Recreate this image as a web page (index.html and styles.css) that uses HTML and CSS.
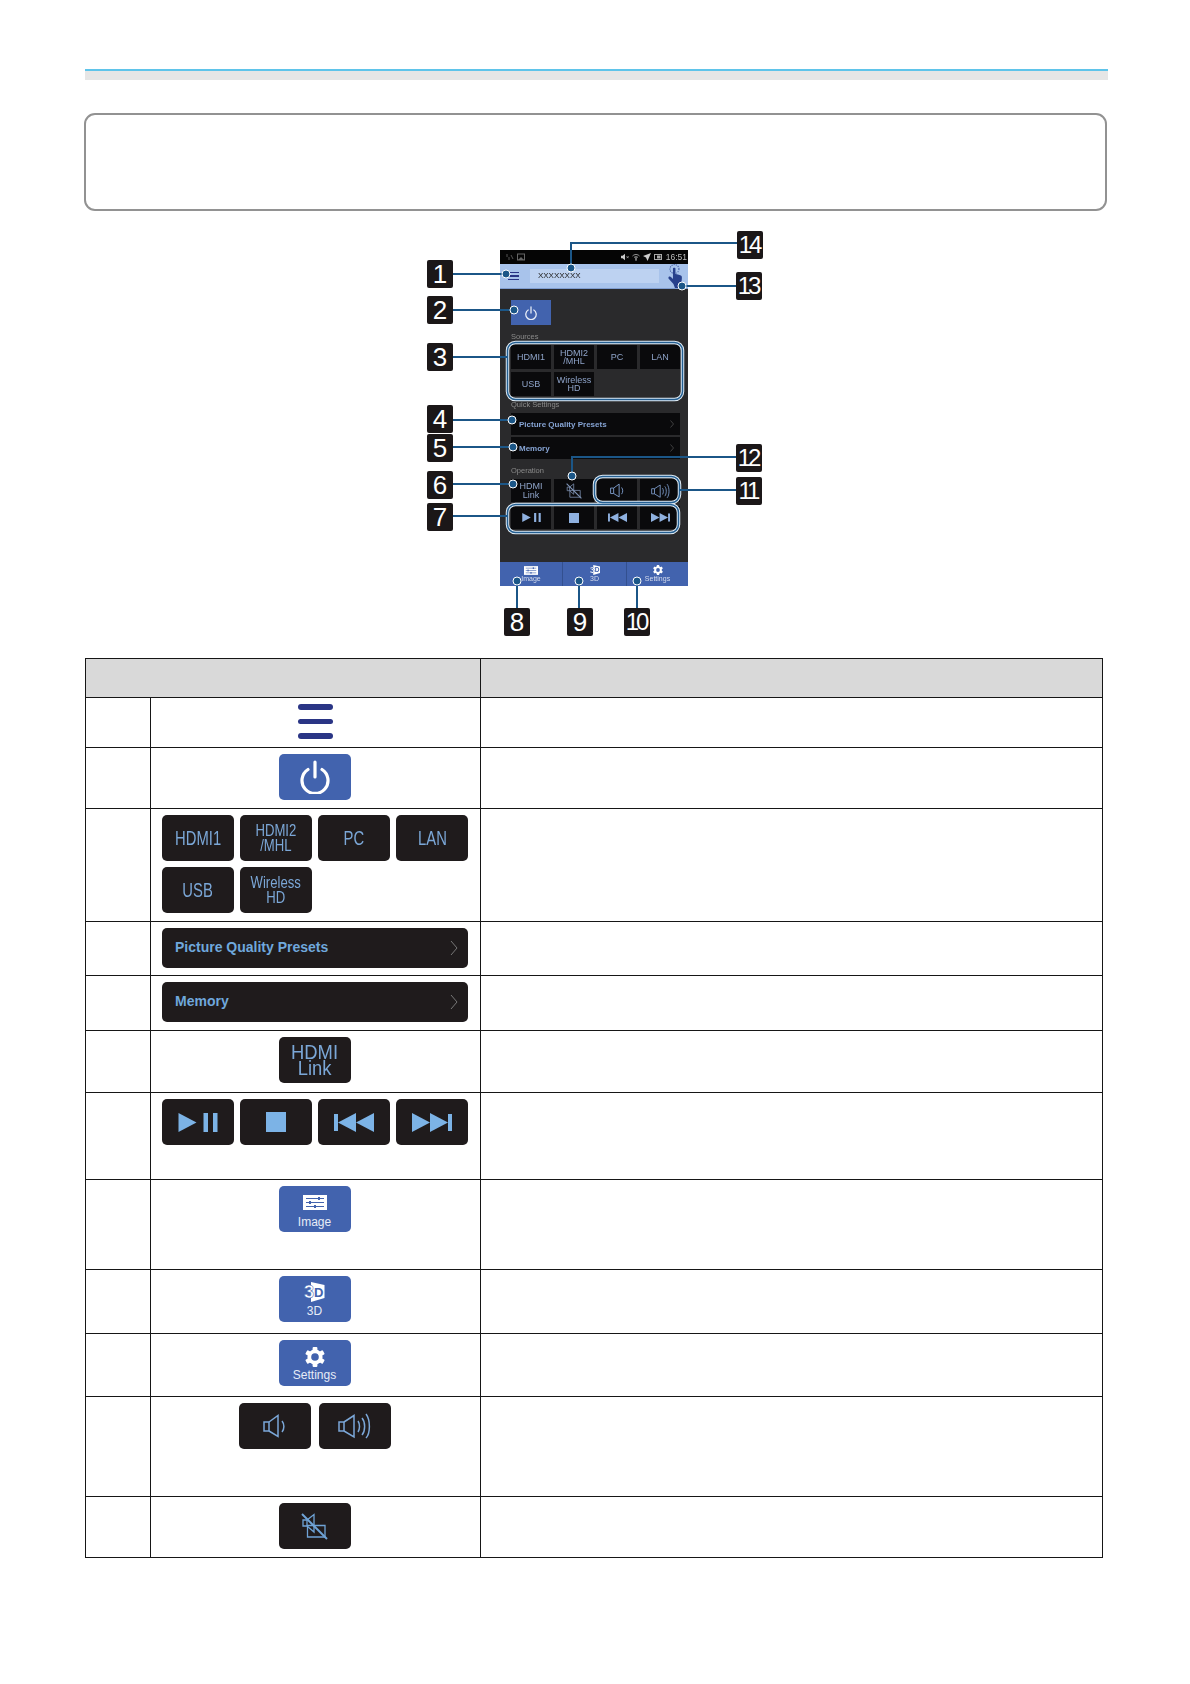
FILE: index.html
```html
<!DOCTYPE html>
<html lang="en">
<head>
    <meta charset="UTF-8" />
    <title>Projector app screen</title>
    <link rel="stylesheet" href="styles.css">
</head>
<body>

<!-- shared icons -->
<svg class="defs" width="0" height="0">
    <symbol id="i-playpause" viewBox="0 0 39 19">
        <path d="M0 0L18 9.5L0 19Z"/><rect x="25" y="0" width="4.5" height="19"/><rect x="34.5" y="0" width="4.5" height="19"/>
    </symbol>
    <symbol id="i-stop" viewBox="0 0 20 20"><rect width="20" height="20"/></symbol>
    <symbol id="i-prev" viewBox="0 0 40 19">
        <rect x="0" y="1" width="4" height="17"/><path d="M22 0V19L4 9.5Z"/><path d="M40 0V19L22 9.5Z"/>
    </symbol>
    <symbol id="i-next" viewBox="0 0 40 19">
        <path d="M0 0V19L18 9.5Z"/><path d="M18 0V19L36 9.5Z"/><rect x="36" y="1" width="4" height="17"/>
    </symbol>
    <symbol id="i-voldown" viewBox="0 0 23 24">
        <g fill="none" stroke="currentColor" stroke-width="1.5">
            <path d="M1 8H6V17H1Z"/><path d="M6 8L15 1.5V22.5L6 17"/><path d="M19 7C21.5 10 21.5 15 19 18"/>
        </g>
    </symbol>
    <symbol id="i-volup" viewBox="0 0 33 28">
        <g fill="none" stroke="currentColor" stroke-width="1.5">
            <path d="M1 10H6V19H1Z"/><path d="M6 10L16 3.5V25L6 19"/><path d="M20 9C22 12 22 17 20 20"/><path d="M24 6C27.5 10 27.5 19 24 23"/><path d="M28 2C32.5 8 32.5 21 28 26"/>
        </g>
    </symbol>
    <symbol id="i-mute" viewBox="0 0 27 27">
        <g fill="none" stroke="currentColor" stroke-width="1.3">
            <path d="M2 7H6V13H2Z"/><path d="M6 7L13 1.5V19L6 13"/><path d="M6.5 12.5H24V24H6.5Z"/>
        </g>
        <path d="M1 1L26 26" stroke="currentColor" stroke-width="2"/>
    </symbol>
    <symbol id="i-image" viewBox="0 0 24 15">
        <rect width="24" height="15" fill="#fff"/>
        <g stroke="#4263ae" stroke-width="1">
            <path d="M3 3.5H21M3 7.5H21M3 11.5H21"/>
        </g>
        <g fill="#4263ae"><rect x="15" y="2" width="2" height="3"/><rect x="6" y="6" width="2" height="3"/><rect x="11" y="10" width="2" height="3"/></g>
    </symbol>
    <symbol id="i-gear" viewBox="0 0 20 20">
        <g fill="#fff">
            <rect x="7.6" y="0" width="4.8" height="20" rx="1"/>
            <rect x="7.6" y="0" width="4.8" height="20" rx="1" transform="rotate(60 10 10)"/>
            <rect x="7.6" y="0" width="4.8" height="20" rx="1" transform="rotate(120 10 10)"/>
            <circle cx="10" cy="10" r="7.6"/>
        </g>
        <circle cx="10" cy="10" r="3.8" fill="#4263ae"/>
    </symbol>
    <symbol id="i-power" viewBox="0 0 30 34">
        <g fill="none" stroke="currentColor" stroke-width="3.2" stroke-linecap="round">
            <path d="M15 2V17"/><path d="M8 9.5A13 13 0 1 0 22 9.5"/>
        </g>
    </symbol>
    <symbol id="i-chevron" viewBox="0 0 8 16">
        <path d="M1 1L7 8L1 15" fill="none" stroke="currentColor" stroke-width="1"/>
    </symbol>
</svg>

<div class="page">

    <div class="top-rule"></div>
    <div class="note-box"></div>

    <!-- схема экрана с выносками -->
    <div class="figure">
        <div class="phone">
            <div class="status-bar">
                <span class="status-left">
                    <svg class="st-icon" viewBox="0 0 8 8"><path d="M1 1V4M3 4V7M5 2L7 6" stroke="#555" fill="none"/></svg>
                    <svg class="st-icon" viewBox="0 0 8 8"><rect x=".5" y="1" width="7" height="6" fill="none" stroke="#666"/><path d="M1 7L4 4L7 7Z" fill="#666"/></svg>
                </span>
                <span class="status-right">
                    <svg class="st-icon" viewBox="0 0 10 8"><path d="M0 2.5H2L5 0V8L2 5.5H0Z" fill="#ccc"/><path d="M7 3L9.5 5.5M9.5 3L7 5.5" stroke="#aaa"/></svg>
                    <svg class="st-icon" viewBox="0 0 8 8"><path d="M.5 3C2.5 1 5.5 1 7.5 3M2 4.5C3 3.500 5 3.500 6 4.500M3 6H5M4 4V8" stroke="#999" fill="none"/></svg>
                    <svg class="st-icon" viewBox="0 0 8 8"><path d="M8 0L0 3L3 4.5L4.5 8Z" fill="#ccc"/></svg>
                    <svg class="st-icon" viewBox="0 0 8 8"><rect x=".5" y="1.5" width="7" height="5" fill="none" stroke="#aaa"/><rect x="3" y="2.500" width="3.500" height="3" fill="#aaa"/></svg>
                    <span class="time">16:51</span>
                </span>
            </div>
            <div class="app-header">
                <span class="small-burger"><i></i><i></i><i></i></span>
                <span class="name-field">XXXXXXXX</span>
                <svg class="hand" viewBox="0 0 14 24">
                    <circle cx="6.500" cy="5" r="4.500" fill="none" stroke="#4a64a8" stroke-width="1.100" stroke-dasharray="1.200 1"/>
                    <path d="M5 4.500C5 3.500 7.500 3.500 7.500 4.500V10L10 10.500L13 11.500C14 12 14 13 14 14L13.500 19L10.500 24H7L5.500 20L0.500 14.500C0 12.500 2 12 3.500 13.500L5 15Z" fill="#27408c"/>
                </svg>
            </div>
            <div class="phone-body">
                <div class="phone-power"><svg class="p-power-icon"><use href="#i-power"/></svg></div>
                <div class="phone-label label-sources">Sources</div>
                <div class="phone-grid">
                    <div class="pbtn">HDMI1</div>
                    <div class="pbtn">HDMI2<br>/MHL</div>
                    <div class="pbtn">PC</div>
                    <div class="pbtn">LAN</div>
                    <div class="pbtn">USB</div>
                    <div class="pbtn">Wireless<br>HD</div>
                </div>
                <div class="phone-label label-quick">Quick Settings</div>
                <div class="phone-row">Picture Quality Presets<svg class="p-chevron"><use href="#i-chevron"/></svg></div>
                <div class="phone-row">Memory<svg class="p-chevron"><use href="#i-chevron"/></svg></div>
                <div class="phone-label label-op">Operation</div>
                <div class="phone-grid op-grid">
                    <div class="pbtn">HDMI<br>Link</div>
                    <div class="pbtn"><svg class="p-mute"><use href="#i-mute"/></svg></div>
                    <div class="pbtn"><svg class="p-voldown"><use href="#i-voldown"/></svg></div>
                    <div class="pbtn"><svg class="p-volup"><use href="#i-volup"/></svg></div>
                    <div class="pbtn"><svg class="p-play"><use href="#i-playpause"/></svg></div>
                    <div class="pbtn"><svg class="p-stop"><use href="#i-stop"/></svg></div>
                    <div class="pbtn"><svg class="p-play"><use href="#i-prev"/></svg></div>
                    <div class="pbtn"><svg class="p-play"><use href="#i-next"/></svg></div>
                </div>
            </div>
            <div class="phone-tabs">
                <div class="ptab"><svg class="p-tab-img"><use href="#i-image"/></svg><span>Image</span></div>
                <div class="ptab">
                    <svg class="p-tab-3d" viewBox="0 0 21 20"><path d="M7 0L20.500 3V16L7 20Z" fill="#fff"/><text x="0" y="16" class="icon-three">3</text><text x="10" y="14.500" class="icon-d">D</text></svg>
                    <span>3D</span>
                </div>
                <div class="ptab"><svg class="p-tab-gear"><use href="#i-gear"/></svg><span>Settings</span></div>
            </div>
        </div>

        <!-- выноски -->
        <svg class="leaders" viewBox="0 0 1018 438">
            <g class="halo">
                <rect x="422.500" y="122.500" width="175" height="57" rx="8"/>
                <rect x="509.500" y="256.500" width="85" height="26" rx="8"/>
                <rect x="422.500" y="284.500" width="171" height="28" rx="8"/>
            </g>
            <g class="ring">
                <rect x="422.500" y="122.500" width="175" height="57" rx="8"/>
                <rect x="509.500" y="256.500" width="85" height="26" rx="8"/>
                <rect x="422.500" y="284.500" width="171" height="28" rx="8"/>
            </g>
            <path class="lead" d="M368 54H421M368 90H429M368 137H422M368 200H427M368 227H428M368 264H428M368 296H422M432 361V388M494 361V388M552 361V388M594 270H651M487 256V237H651M597 66H651M486 48V23H652"/>
            <g class="dot">
                <circle cx="421" cy="54" r="4"/><circle cx="429" cy="90" r="4"/><circle cx="427" cy="200" r="4"/>
                <circle cx="428" cy="227" r="4"/><circle cx="428" cy="264" r="4"/><circle cx="432" cy="361" r="4"/>
                <circle cx="494" cy="361" r="4"/><circle cx="552" cy="361" r="4"/><circle cx="487" cy="256" r="4"/>
                <circle cx="597" cy="66" r="4"/><circle cx="486" cy="48" r="4"/>
            </g>
        </svg>
        <span class="num c1">1</span>
        <span class="num c2">2</span>
        <span class="num c3">3</span>
        <span class="num c4">4</span>
        <span class="num c5">5</span>
        <span class="num c6">6</span>
        <span class="num c7">7</span>
        <span class="num c8">8</span>
        <span class="num c9">9</span>
        <span class="num two c10">10</span>
        <span class="num two c11">11</span>
        <span class="num two c12">12</span>
        <span class="num two c13">13</span>
        <span class="num two c14">14</span>
    </div>

    <table class="parts">
        <colgroup><col class="col-num"><col class="col-btn"><col class="col-text"></colgroup>
        <thead>
        <tr class="r-head"><th colspan="2"></th><th></th></tr>
        </thead>
        <tbody>
        <tr class="r1"><td></td><td><div class="center"><span class="burger"><i></i><i></i><i></i></span></div></td><td></td></tr>
        <tr class="r2"><td></td><td><div class="center"><div class="btn blue"><svg class="power-icon"><use href="#i-power"/></svg></div></div></td><td></td></tr>
        <tr class="r3"><td></td><td>
            <div class="btn-grid">
                <div class="btn"><span class="tall">HDMI1</span></div>
                <div class="btn"><span class="tall-two">HDMI2<br>/MHL</span></div>
                <div class="btn"><span class="tall">PC</span></div>
                <div class="btn"><span class="tall">LAN</span></div>
                <div class="btn"><span class="tall">USB</span></div>
                <div class="btn"><span class="tall-two">Wireless<br>HD</span></div>
            </div>
        </td><td></td></tr>
        <tr class="r4"><td></td><td><div class="menu-row">Picture Quality Presets<svg class="chevron"><use href="#i-chevron"/></svg></div></td><td></td></tr>
        <tr class="r5"><td></td><td><div class="menu-row">Memory<svg class="chevron"><use href="#i-chevron"/></svg></div></td><td></td></tr>
        <tr class="r6"><td></td><td><div class="center"><div class="btn"><span class="link-text">HDMI<br>Link</span></div></div></td><td></td></tr>
        <tr class="r7"><td></td><td>
            <div class="btn-grid">
                <div class="btn"><svg class="play-icon"><use href="#i-playpause"/></svg></div>
                <div class="btn"><svg class="stop-icon"><use href="#i-stop"/></svg></div>
                <div class="btn"><svg class="play-icon"><use href="#i-prev"/></svg></div>
                <div class="btn"><svg class="play-icon"><use href="#i-next"/></svg></div>
            </div>
        </td><td></td></tr>
        <tr class="r8"><td></td><td><div class="center"><div class="btn blue tab"><svg class="img-icon"><use href="#i-image"/></svg><span>Image</span></div></div></td><td></td></tr>
        <tr class="r9"><td></td><td><div class="center"><div class="btn blue tab">
            <svg class="d3-icon" viewBox="0 0 21 20"><path d="M7 0L20.500 3V16L7 20Z" fill="#fff"/><text x="0" y="16" class="icon-three">3</text><text x="10" y="14.500" class="icon-d">D</text></svg>
            <span>3D</span>
        </div></div></td><td></td></tr>
        <tr class="r10"><td></td><td><div class="center"><div class="btn blue tab"><svg class="gear-icon"><use href="#i-gear"/></svg><span>Settings</span></div></div></td><td></td></tr>
        <tr class="r11"><td></td><td>
            <div class="center gap8">
                <div class="btn"><svg class="voldown-icon"><use href="#i-voldown"/></svg></div>
                <div class="btn"><svg class="volup-icon"><use href="#i-volup"/></svg></div>
            </div>
        </td><td></td></tr>
        <tr class="r12"><td></td><td><div class="center"><div class="btn"><svg class="mute-icon"><use href="#i-mute"/></svg></div></div></td><td></td></tr>
        </tbody>
    </table>

</div>

</body>
</html>
```

FILE: styles.css
```css
body {
    margin: 0;
    padding: 0;
    background: #fff;
    font-family: "Liberation Sans", Arial, sans-serif;
}

.defs {
    position: absolute;
}

.icon-three {
    font: bold 18px "Liberation Sans", sans-serif;
    fill: #fff;
    stroke: #4263ae;
    stroke-width: .5px;
}

.icon-d {
    font: bold 13px "Liberation Sans", sans-serif;
    fill: #4263ae;
}

.page {
    padding: 69px 0 0 85px;
}

/* верхняя полоса */
.top-rule {
    width: 1023px;
    height: 9px;
    background: #e6e6e6;
    border-top: 2px solid #5fc4ea;
}

.note-box {
    box-sizing: border-box;
    width: 1023px;
    height: 98px;
    margin: 33px 0 0 -1px;
    border: 2px solid #929292;
    border-radius: 11px;
}

/* схема */
.figure {
    position: relative;
    height: 438px;
    margin-top: 9px;
}

.phone {
    position: absolute;
    left: 415px;
    top: 30px;
    width: 188px;
    height: 336px;
    display: flex;
    flex-direction: column;
    background: #2a2a2c;
    filter: blur(.5px);
}

.status-bar {
    height: 14px;
    background: #050505;
    display: flex;
    justify-content: space-between;
    align-items: center;
    padding: 0 1px 0 6px;
}

.status-left, .status-right {
    display: flex;
    align-items: center;
    gap: 3px;
}

.st-icon {
    width: 8px;
    height: 8px;
}

.time {
    font-size: 8.5px;
    color: #bbb;
    margin-left: 1px;
}

.app-header {
    height: 25px;
    background: #a8c3eb;
    border-bottom: 1px solid #7f9dd0;
    box-sizing: border-box;
    display: flex;
    align-items: center;
    padding: 0 6px 0 8px;
}

.small-burger {
    display: flex;
    flex-direction: column;
    gap: 2px;
    width: 11px;
}

.small-burger i {
    height: 1.5px;
    background: #2a3585;
}

.name-field {
    width: 130px;
    height: 14px;
    line-height: 14px;
    margin-left: 11px;
    padding-left: 8px;
    box-sizing: border-box;
    background: #bdd2f1;
    font-size: 8px;
    color: #222;
}

.hand {
    width: 14px;
    height: 24px;
    margin-left: 9px;
}

.phone-body {
    flex: 1;
    padding: 11px 8px 0 11px;
}

.phone-power {
    width: 40px;
    height: 25px;
    background: #4263ae;
    display: flex;
    align-items: center;
    justify-content: center;
}

.p-power-icon {
    width: 12px;
    height: 14px;
    color: #e6ecf7;
}

.phone-label {
    font-size: 7.5px;
    color: #8a8a8a;
    display: flex;
    align-items: center;
}

.label-sources { height: 20px; padding-top: 3px; box-sizing: border-box; }
.label-quick { height: 17px; }
.label-op { height: 18px; }

.phone-grid {
    display: grid;
    grid-template-columns: repeat(4, 40px);
    grid-auto-rows: 24px;
    gap: 3px;
}

.op-grid {
    grid-auto-rows: 23px;
    row-gap: 4px;
}

.pbtn {
    background: #0a0a0c;
    color: #8ea3c8;
    font-size: 9px;
    line-height: 8.5px;
    display: flex;
    align-items: center;
    justify-content: center;
    text-align: center;
}

.phone-row {
    width: 169px;
    height: 22px;
    margin-bottom: 2px;
    padding-left: 8px;
    box-sizing: border-box;
    background: #0a0a0c;
    color: #86a4d4;
    font-size: 8px;
    font-weight: bold;
    display: flex;
    align-items: center;
    justify-content: space-between;
}

.p-chevron {
    width: 4px;
    height: 8px;
    margin-right: 6px;
    color: #777;
}

.p-mute { width: 16px; height: 16px; color: #7f93b5; }
.p-voldown { width: 14px; height: 15px; color: #7f9fd0; }
.p-volup { width: 19px; height: 16px; color: #7f9fd0; }
.p-play { width: 19px; height: 9px; fill: #8fb1e0; }
.p-stop { width: 10px; height: 10px; fill: #8fb1e0; }

.phone-tabs {
    height: 24px;
    display: grid;
    grid-template-columns: 63px 64px 61px;
    background: #4263ae;
}

.ptab {
    display: flex;
    flex-direction: column;
    align-items: center;
    color: #d5dcee;
    font-size: 7px;
    line-height: 8px;
    padding-top: 4px;
    box-sizing: border-box;
    border-right: 1px solid #33508f;
}

.ptab:last-child {
    border-right: none;
}

.p-tab-img { width: 14px; height: 9px; }
.p-tab-3d { width: 14px; height: 10px; margin-top: -1px; }
.p-tab-gear { width: 10px; height: 10px; margin-top: -1px; }

.leaders {
    position: absolute;
    left: 0;
    top: 0;
    width: 1018px;
    height: 438px;
    fill: none;
}

.halo rect {
    stroke: #dfeaf3;
    stroke-width: 3.5;
}

.ring rect {
    stroke: #245f92;
    stroke-width: 1.5;
}

.lead {
    stroke: #1b5687;
    stroke-width: 2;
}

.dot circle {
    fill: #1b5687;
    stroke: #fff;
    stroke-width: 1;
}

.num {
    position: absolute;
    width: 26px;
    height: 28px;
    background: #1b1718;
    border-radius: 2px;
    color: #fff;
    font-size: 26px;
    line-height: 28px;
    text-align: center;
}

.two {
    font-size: 24px;
    letter-spacing: -3px;
    text-indent: -2px;
}

.c1 { left: 342px; top: 40px; }
.c2 { left: 342px; top: 76px; }
.c3 { left: 342px; top: 123px; }
.c4 { left: 342px; top: 185px; }
.c5 { left: 342px; top: 214px; }
.c6 { left: 342px; top: 251px; }
.c7 { left: 342px; top: 283px; }
.c8 { left: 419px; top: 388px; }
.c9 { left: 482px; top: 388px; }
.c10 { left: 539px; top: 388px; }
.c11 { left: 651px; top: 257px; }
.c12 { left: 651px; top: 224px; }
.c13 { left: 651px; top: 52px; }
.c14 { left: 652px; top: 11px; }

/* таблица */
table.parts {
    border-collapse: collapse;
    table-layout: fixed;
    width: 1018px;
}

.col-num { width: 65px; }
.col-btn { width: 330px; }

.parts th, .parts td {
    border: 1px solid #161616;
    padding: 6px 0 0;
    vertical-align: top;
}

.parts th {
    background: #d9d9d9;
}

.r-head { height: 39px; }
.r1 { height: 50px; }
.r2 { height: 61px; }
.r3 { height: 113px; }
.r4 { height: 54px; }
.r5 { height: 55px; }
.r6 { height: 62px; }
.r7 { height: 87px; }
.r8 { height: 90px; }
.r9 { height: 64px; }
.r10 { height: 63px; }
.r11 { height: 100px; }
.r12 { height: 61px; }

.center {
    display: flex;
    justify-content: center;
    padding-right: 2px;
}

.gap8 {
    gap: 8px;
}

.burger {
    display: flex;
    flex-direction: column;
    gap: 9px;
    width: 35px;
    margin-left: 2px;
}

.burger i {
    height: 5.5px;
    border-radius: 3px;
    background: #2a3585;
}

.btn {
    width: 72px;
    height: 46px;
    border-radius: 5px;
    background: #1f1b1c;
    color: #7ba7d7;
    display: flex;
    align-items: center;
    justify-content: center;
}

.btn.blue {
    background: #4263ae;
}

.btn-grid {
    display: grid;
    grid-template-columns: repeat(4, 72px);
    gap: 6px;
    padding-left: 11px;
}

.tall {
    font-size: 20px;
    transform: scaleX(.74);
}

.tall-two {
    font-size: 16px;
    line-height: 15px;
    text-align: center;
    transform: scaleX(.82);
}

.link-text {
    font-size: 20px;
    line-height: 16px;
    text-align: center;
    transform: scaleX(.92);
}

.menu-row {
    box-sizing: border-box;
    width: 306px;
    height: 40px;
    margin-left: 11px;
    padding: 0 10px 2px 13px;
    border-radius: 5px;
    background: #1f1b1c;
    color: #6fa8dc;
    font-size: 14px;
    font-weight: bold;
    display: flex;
    align-items: center;
    justify-content: space-between;
}

.chevron {
    width: 8px;
    height: 16px;
    margin-top: 2px;
    color: #777;
}

.power-icon {
    width: 30px;
    height: 34px;
    color: #fff;
}

.play-icon {
    width: 40px;
    height: 19px;
    fill: #7cb3e6;
}

.stop-icon {
    width: 20px;
    height: 20px;
    fill: #7cb3e6;
}

.tab {
    flex-direction: column;
    color: #e6ecf7;
    font-size: 12px;
    justify-content: flex-start;
    box-sizing: border-box;
}

.img-icon {
    width: 24px;
    height: 15px;
    margin: 9px 0 5px;
}

.d3-icon {
    width: 21px;
    height: 20px;
    margin: 6px 0 2px;
}

.gear-icon {
    width: 20px;
    height: 20px;
    margin: 7px 0 1px;
}

.voldown-icon {
    width: 23px;
    height: 24px;
}

.volup-icon {
    width: 33px;
    height: 28px;
}

.mute-icon {
    width: 27px;
    height: 27px;
    color: #6fa3d6;
}
```
